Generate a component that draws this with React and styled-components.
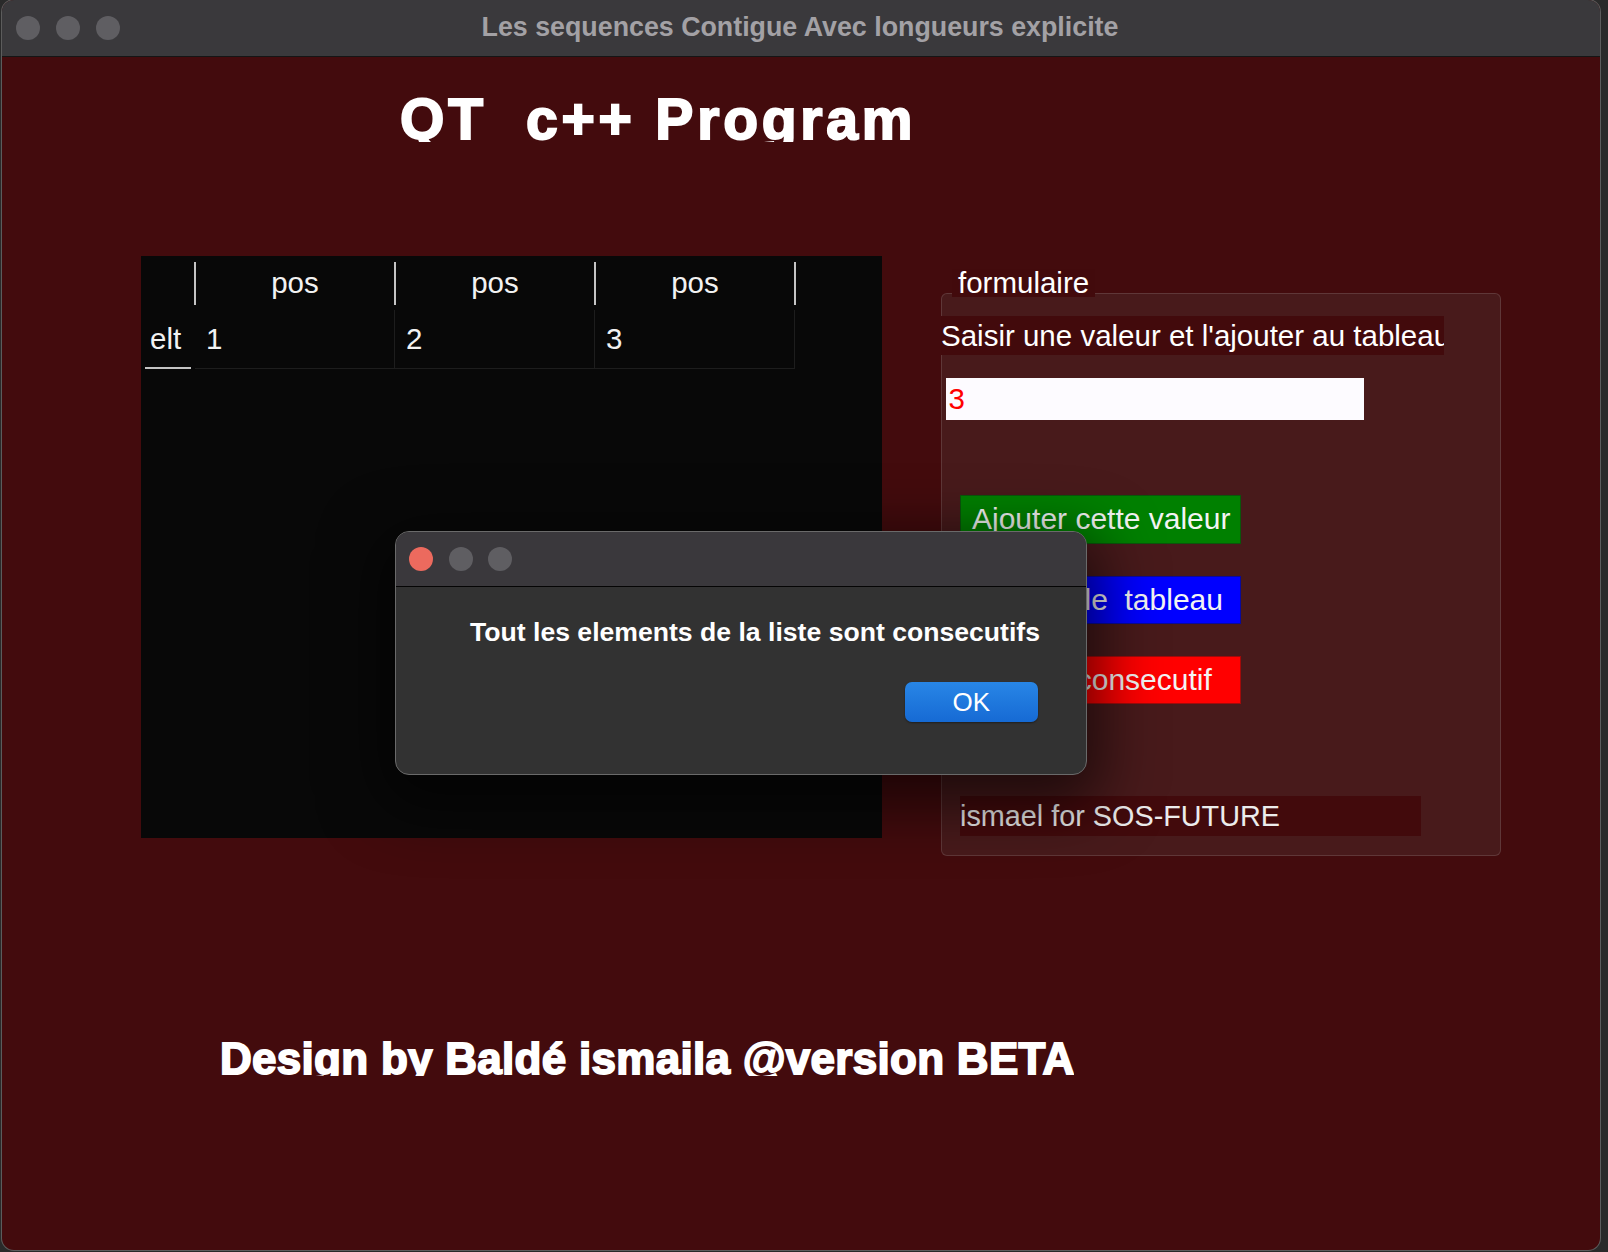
import React from "react";
import styled, { createGlobalStyle } from "styled-components";

const Global = createGlobalStyle`
  html, body { margin: 0; padding: 0; }
  body {
    width: 1608px;
    height: 1252px;
    overflow: hidden;
    background: #2a2a2a;
    font-family: "Liberation Sans", Arial, sans-serif;
  }
`;

const Window = styled.div`
  position: relative;
  margin-left: 2px;
  width: 1598px;
  height: 1250px;
  border-radius: 12px;
  overflow: hidden;
  background: #430b0d;
  box-shadow: 0 0 0 1px #5c5c5c;
  display: flex;
  flex-direction: column;
`;

const TitleBar = styled.div`
  position: relative;
  height: 56px;
  flex: 0 0 56px;
  background: #3a393c;
  border-bottom: 1px solid #151515;
  display: flex;
  align-items: center;
  padding-left: ${(p) => p.$pad}px;
  gap: 16px;
`;

const Light = styled.span`
  width: 24px;
  height: 24px;
  border-radius: 50%;
  background: ${(p) => p.$color || "#5f5e62"};
  flex: 0 0 24px;
`;

const WindowTitle = styled.div`
  flex: 1;
  text-align: center;
  margin-left: -136px;
  margin-top: -2px;
  font-weight: 700;
  font-size: 26.8px;
  color: #a3a1a5;
`;

const Content = styled.div`
  display: flex;
  flex-direction: column;
  align-items: flex-start;
`;

const ClipLine = styled.div`
  overflow: hidden;
  height: ${(p) => p.$h}px;
  margin-top: ${(p) => p.$top}px;
  margin-left: ${(p) => p.$left}px;
`;

const Heading = styled.div`
  white-space: pre;
  font-family: "Liberation Sans", Arial, sans-serif;
  font-weight: 700;
  font-size: 57px;
  line-height: 57px;
  letter-spacing: 3.8px;
  color: #ffffff;
  -webkit-text-stroke: 2px #ffffff;
`;

const Footer = styled.div`
  white-space: pre;
  font-family: "Liberation Sans", Arial, sans-serif;
  font-weight: 700;
  font-size: 44px;
  line-height: 44px;
  letter-spacing: 0.28px;
  color: #ffffff;
  -webkit-text-stroke: 1.8px #ffffff;
`;

const MainRow = styled.div`
  display: flex;
  align-items: flex-start;
  margin-top: 114.6px;
`;

const TablePanel = styled.div`
  margin-left: 138.5px;
  width: 741.5px;
  height: 582px;
  background: #080808;
  display: grid;
  grid-template-columns: 54.5px repeat(3, 200px);
  grid-template-rows: 53.5px 59.5px;
  align-content: start;
  color: #f2f2f2;
  font-size: 29.5px;
`;

const Corner = styled.div``;

const HeaderCell = styled.div`
  position: relative;
  display: flex;
  align-items: center;
  justify-content: center;
  &::after {
    content: "";
    position: absolute;
    right: -1px;
    top: 5.5px;
    bottom: 5px;
    width: 2px;
    background: #c4c4c4;
  }
  ${(p) =>
    p.$first &&
    `
    &::before {
      content: "";
      position: absolute;
      left: -1px;
      top: 5.5px;
      bottom: 5px;
      width: 2px;
      background: #c4c4c4;
    }
  `}
`;

const RowHeader = styled.div`
  position: relative;
  display: flex;
  align-items: center;
  padding-left: 9.5px;
  &::after {
    content: "";
    position: absolute;
    left: 4.5px;
    right: 4px;
    bottom: 0px;
    height: 2px;
    background: #c4c4c4;
  }
`;

const Cell = styled.div`
  display: flex;
  align-items: center;
  padding-left: 11px;
  border-bottom: 1px solid #1d1d1d;
  border-right: 1px solid #1d1d1d;
`;

const Group = styled.div`
  margin-top: 13px;
  margin-left: 59px;
  display: flex;
  flex-direction: column;
  align-items: flex-start;
`;

const GroupTitle = styled.div`
  position: relative;
  z-index: 1;
  margin-left: 11px;
  margin-bottom: -4px;
  width: 143px;
  height: 28px;
  padding-left: 6px;
  box-sizing: border-box;
  background: #420a0c;
  color: #ffffff;
  font-size: 29.5px;
  line-height: 28px;
`;

const GroupBox = styled.div`
  box-sizing: border-box;
  width: 560px;
  height: 563px;
  background: #481a1b;
  border: 1px solid rgba(255, 255, 255, 0.13);
  border-radius: 6px;
  display: flex;
  flex-direction: column;
  align-items: flex-start;
`;

const Label = styled.div`
  box-sizing: border-box;
  margin-top: ${(p) => p.$top}px;
  margin-left: ${(p) => p.$left}px;
  width: ${(p) => p.$w}px;
  height: ${(p) => p.$h}px;
  background: #420a0c;
  color: ${(p) => p.$color || "#ffffff"};
  font-size: ${(p) => p.$size || 29.5}px;
  line-height: ${(p) => p.$h}px;
  white-space: nowrap;
  overflow: hidden;
`;

const Input = styled.div`
  box-sizing: border-box;
  margin-top: 23px;
  margin-left: 3.5px;
  width: 418.5px;
  height: 42px;
  background: #fdfbff;
  color: #ff0000;
  font-size: 29.5px;
  line-height: 42px;
  padding-left: 3px;
`;

const Button = styled.div`
  box-sizing: border-box;
  margin-top: ${(p) => p.$top}px;
  margin-left: 18px;
  width: 281px;
  height: ${(p) => p.$h}px;
  background: ${(p) => p.$bg};
  border: 1px solid ${(p) => p.$border};
  color: #f4f4f4;
  font-size: 30px;
  display: flex;
  align-items: center;
  padding-left: ${(p) => p.$pad || 11}px;
  white-space: pre;
  overflow: hidden;
`;

const Dialog = styled.div`
  position: absolute;
  left: 393px;
  top: 531px;
  width: 692px;
  height: 244px;
  box-sizing: border-box;
  border-radius: 14px;
  overflow: hidden;
  background: #323232;
  border: 1px solid #6a6a6a;
  box-shadow: 0 18px 60px 14px rgba(0, 0, 0, 0.58);
  display: flex;
  flex-direction: column;
`;

const DialogBar = styled.div`
  height: 54px;
  flex: 0 0 54px;
  background: #3a383c;
  border-bottom: 1px solid #050505;
  display: flex;
  align-items: center;
  padding-left: 13px;
  gap: 15.5px;
`;

const DialogBody = styled.div`
  display: flex;
  flex-direction: column;
  align-items: flex-start;
`;

const Message = styled.div`
  margin-top: 30px;
  margin-left: 74px;
  font-weight: 700;
  font-size: 26.6px;
  line-height: 30px;
  color: #ffffff;
  white-space: nowrap;
`;

const OkButton = styled.div`
  align-self: flex-end;
  margin-top: 35px;
  margin-right: 48px;
  width: 133.5px;
  height: 40px;
  box-sizing: border-box;
  border-radius: 7px;
  background: linear-gradient(#2886e6, #166ad4);
  box-shadow: 0 1px 2px rgba(0, 0, 0, 0.4);
  color: #ffffff;
  font-size: 26px;
  display: flex;
  align-items: center;
  justify-content: center;
`;

export default function App() {
  const cols = ["1", "2", "3"];
  return (
    <>
      <Global />
      <Window>
        <TitleBar $pad={14}>
          <Light />
          <Light />
          <Light />
          <WindowTitle>Les sequences Contigue Avec longueurs explicite</WindowTitle>
        </TitleBar>
        <Content>
          <ClipLine $top={33.6} $left={398} $h={51}>
            <Heading>{"QT  c++ Program"}</Heading>
          </ClipLine>
          <MainRow>
            <TablePanel>
              <Corner />
              {cols.map((c, i) => (
                <HeaderCell key={"h" + c} $first={i === 0}>
                  pos
                </HeaderCell>
              ))}
              <RowHeader>elt</RowHeader>
              {cols.map((c) => (
                <Cell key={"c" + c}>{c}</Cell>
              ))}
            </TablePanel>
            <Group>
              <GroupTitle>formulaire</GroupTitle>
              <GroupBox>
                <Label $top={22} $left={-1} $w={503} $h={39}>
                  Saisir une valeur et l'ajouter au tableau
                </Label>
                <Input>3</Input>
                <Button $top={75} $h={48.5} $bg="#008000" $border="#0b560b">
                  Ajouter cette valeur
                </Button>
                <Button $top={32.5} $h={47.5} $pad={14} $bg="#0000ff" $border="#0a0a9a">
                  {"Afficher le  tableau"}
                </Button>
                <Button $top={32.5} $h={47.5} $pad={14} $bg="#ff0000" $border="#a10a0a">
                  Verifier consecutif
                </Button>
                <Label $top={92.5} $left={18} $w={461} $h={40} $size={28.8} $color="#ececec">
                  ismael for SOS-FUTURE
                </Label>
              </GroupBox>
            </Group>
          </MainRow>
          <ClipLine $top={181.3} $left={218} $h={38.7}>
            <Footer>{"Design by Baldé ismaila @version BETA"}</Footer>
          </ClipLine>
        </Content>
        <Dialog>
          <DialogBar>
            <Light $color="#ec6a5e" />
            <Light />
            <Light />
          </DialogBar>
          <DialogBody>
            <Message>Tout les elements de la liste sont consecutifs</Message>
            <OkButton>OK</OkButton>
          </DialogBody>
        </Dialog>
      </Window>
    </>
  );
}
